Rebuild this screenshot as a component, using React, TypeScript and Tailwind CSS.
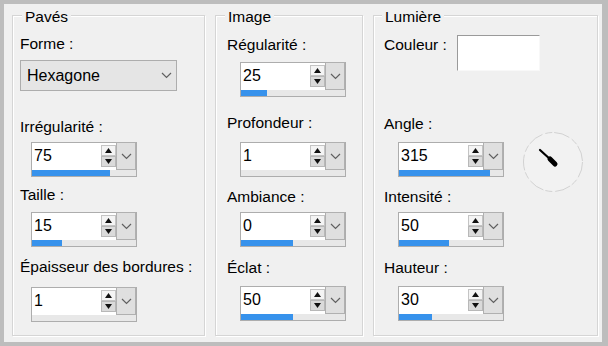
import React from 'react';

const font = { fontFamily: '"Liberation Sans", Arial, sans-serif' };

function Chevron() {
    return (
        <svg width="11" height="7" viewBox="0 0 11 7">
            <polyline points="1,1 5.5,5.5 10,1" fill="none" stroke="#606060" strokeWidth="1.2" />
        </svg>
    );
}

function SpinBox({ value, frac }: { value: string; frac: number }) {
    return (
        <div className="w-[106px] h-[35px] border border-[#adadad] bg-white flex flex-col">
            <div className="flex h-[26px]">
                <div className="flex-1 pl-[2px] leading-[26px] text-[16px] text-black">{value}</div>
                <div className="w-[16px] flex flex-col justify-center items-center">
                    <div className="w-[15px] h-[11px] border border-[#c4c4c4] bg-[#f4f4f4] flex items-center justify-center">
                        <svg width="7" height="5" viewBox="0 0 7 5"><polygon points="0,5 3.5,0 7,5" fill="#111" /></svg>
                    </div>
                    <div className="w-[15px] h-[11px] border border-[#b8b8b8] bg-[#dadada] flex items-center justify-center">
                        <svg width="7" height="5" viewBox="0 0 7 5"><polygon points="0,0 7,0 3.5,5" fill="#111" /></svg>
                    </div>
                </div>
                <div className="w-[20px] h-[28px] bg-[#dfdfdf] border border-[#b0b0b0] -mt-px flex items-center justify-center">
                    <Chevron />
                </div>
            </div>
            <div className="mt-[1px] h-[6px] bg-[#e8e8e8]">
                <div className="h-full bg-[#3792ec]" style={{ width: `${frac * 100}%` }} />
            </div>
        </div>
    );
}

function Group({ title, width, legendMl, pl, children }: { title: string; width: string; legendMl: string; pl: string; children: React.ReactNode }) {
    return (
        <div className={`${width} h-[321px] border border-[#d5d5d5] shadow-[inset_1px_1px_0_#ffffff,1px_1px_0_#ffffff] flex flex-col ${pl}`}>
            <span className={`-mt-[9px] ${legendMl} self-start px-[3px] bg-[#f0f0f0] leading-[20px]`}>{title}</span>
            {children}
        </div>
    );
}

export default function App() {
    return (
        <main className="w-[608px] h-[346px] bg-[#bdbdbd] pt-[4px] pl-[4px] pr-[6px] pb-[4px] text-black" style={font}>
            <div className="h-[338px] bg-[#f0f0f0] pt-[11px] pl-[8px] flex gap-[10px] text-[15.5px]">
                {/* PAVES */}
                <Group title="Pavés" width="w-[193px]" legendMl="ml-[2px]" pl="pl-[7px]">
                    <div className="mt-[7px] leading-[20px]">Forme :</div>
                    <div className="mt-[6px] w-[157px] h-[31px] bg-[#e5e5e5] border border-[#adadad] flex items-center justify-between pl-[6px] pr-[4px] text-[16px]">
                        <span>Hexagone</span>
                        <Chevron />
                    </div>
                    <div className="mt-[26px] leading-[20px]">Irrégularité :</div>
                    <div className="mt-[5px] ml-[11px]"><SpinBox value="75" frac={0.75} /></div>
                    <div className="mt-[8px] leading-[20px]">Taille :</div>
                    <div className="mt-[7px] ml-[11px]"><SpinBox value="15" frac={0.29} /></div>
                    <div className="mt-[10px] leading-[20px] whitespace-nowrap">Épaisseur des bordures :</div>
                    <div className="mt-[10px] ml-[11px]"><SpinBox value="1" frac={0} /></div>
                </Group>

                {/* IMAGE */}
                <Group title="Image" width="w-[148px]" legendMl="-ml-[2px]" pl="pl-[11px]">
                    <div className="mt-[8px] leading-[20px]">Régularité :</div>
                    <div className="mt-[7px] ml-[13px]"><SpinBox value="25" frac={0.25} /></div>
                    <div className="mt-[16px] leading-[20px]">Profondeur :</div>
                    <div className="mt-[9px] ml-[13px]"><SpinBox value="1" frac={0} /></div>
                    <div className="mt-[10px] leading-[20px]">Ambiance :</div>
                    <div className="mt-[5px] ml-[13px]"><SpinBox value="0" frac={0.5} /></div>
                    <div className="mt-[11px] leading-[20px]">Éclat :</div>
                    <div className="mt-[8px] ml-[13px]"><SpinBox value="50" frac={0.5} /></div>
                </Group>

                {/* LUMIERE */}
                <Group title="Lumière" width="w-[225px]" legendMl="-ml-[2px]" pl="pl-[10px]">
                    <div className="mt-[8px] flex items-start">
                        <div className="w-[73px] leading-[20px]">Couleur :</div>
                        <div className="w-[83px] h-[36px] bg-white border border-t-[#9a9a9a] border-l-[#9a9a9a] border-r-[#f8f8f8] border-b-[#f8f8f8]" />
                    </div>
                    <div className="mt-[43px] leading-[20px]">Angle :</div>
                    <div className="mt-[8px] ml-[14px] h-[35px] flex items-center">
                        <SpinBox value="315" frac={0.875} />
                        <svg width="62" height="62" viewBox="0 0 62 62" className="ml-[18px] mt-[5px] shrink-0">
                            <circle cx="31" cy="31" r="29.5" fill="#f2f2f2" stroke="#d2d2d2" strokeWidth="1" strokeDasharray="16 3 7 2" />
                            <line x1="18" y1="19" x2="29" y2="29" stroke="#000" strokeWidth="2.2" strokeLinecap="round" />
                            <line x1="28" y1="28" x2="33" y2="33" stroke="#000" strokeWidth="5" strokeLinecap="round" />
                        </svg>
                    </div>
                    <div className="mt-[10px] leading-[20px]">Intensité :</div>
                    <div className="mt-[5px] ml-[14px]"><SpinBox value="50" frac={0.48} /></div>
                    <div className="mt-[11px] leading-[20px]">Hauteur :</div>
                    <div className="mt-[8px] ml-[14px]"><SpinBox value="30" frac={0.32} /></div>
                </Group>
            </div>
        </main>
    );
}
